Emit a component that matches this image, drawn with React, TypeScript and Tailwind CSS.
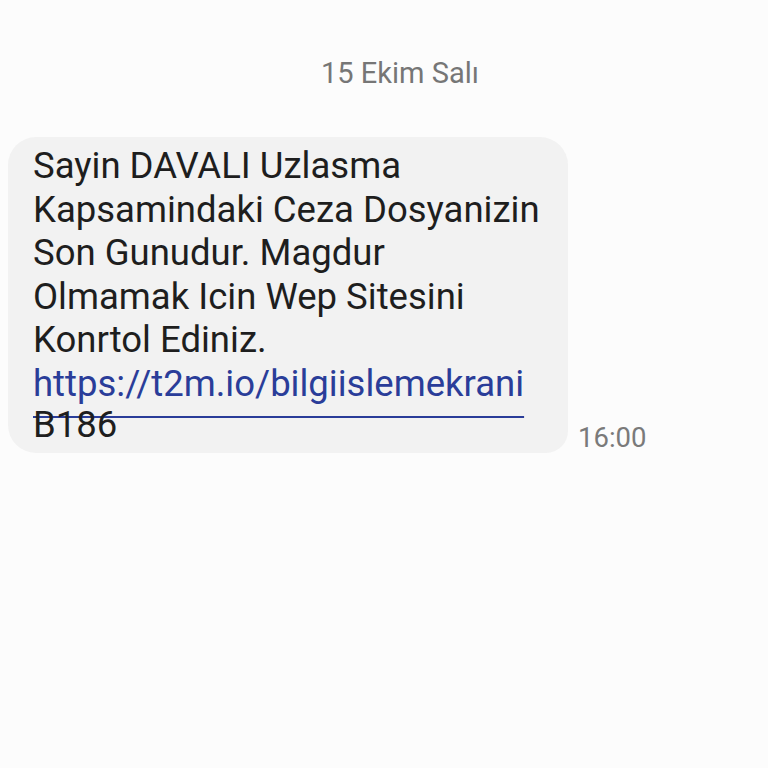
export default function App() {
  const lines = [
    'Sayin DAVALI Uzlasma',
    'Kapsamindaki Ceza Dosyanizin',
    'Son Gunudur. Magdur',
    'Olmamak Icin Wep Sitesini',
    'Konrtol Ediniz.',
  ]

  return (
    <div className="min-h-screen w-[768px] bg-[#fcfcfc] font-['Roboto',sans-serif]">
      {/* Date header */}
      <div className="flex justify-center pl-[32px] pt-[56px]">
        <span className="text-[29px] leading-[34px] text-[#767676]">15 Ekim Salı</span>
      </div>

      {/* Message row */}
      <div className="mt-[47px] flex items-end pl-[8px]">
        <div className="w-[560px] rounded-[28px] rounded-br-[22px] bg-[#f2f2f2] pl-[25px] pt-[7px] pb-[6px]">
          <div className="text-[36.5px] leading-[43.5px] text-[#1e1e1e] whitespace-nowrap">
            {lines.map((line) => (
              <span key={line} className="block">{line}</span>
            ))}
            <span className="block text-[#2a3d99] underline decoration-2 underline-offset-[20px]">
              https://t2m.io/bilgiislemekrani
            </span>
            <span className="block -mt-[2px]">B186</span>
          </div>
        </div>
        <span className="ml-[10px] text-[27.5px] leading-[30px] text-[#7a7a7a]">16:00</span>
      </div>
    </div>
  )
}
